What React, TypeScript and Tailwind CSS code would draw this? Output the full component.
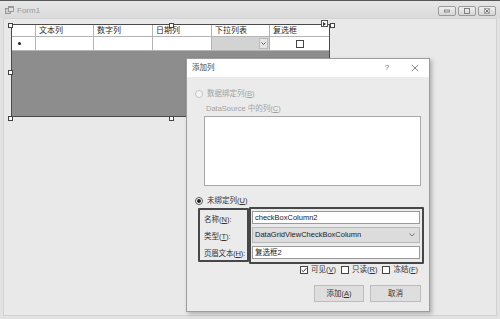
import React from 'react'

const cols = [
  { label: '文本列', w: 'w-[58px]' },
  { label: '数字列', w: 'w-[59px]' },
  { label: '日期列', w: 'w-[59px]' },
  { label: '下拉列表', w: 'w-[58px]' },
  { label: '复选框', w: 'w-[59px]' },
]

// designer selection handles around the grid (x, y centers)
const handles = [
  { id: 'tl', cls: 'left-[8px] top-[22px]' },
  { id: 'tm', cls: 'left-[169px] top-[22px]' },
  { id: 'tr', cls: 'left-[330px] top-[22px]' },
  { id: 'ml', cls: 'left-[8px] top-[69px]' },
  { id: 'bl', cls: 'left-[8px] top-[115px]' },
  { id: 'bm', cls: 'left-[169px] top-[115px]' },
]

function Key({ k }: { k: string }) {
  return (
    <>
      (<span className="underline">{k}</span>)
    </>
  )
}

function Radio({ checked, disabled }: { checked?: boolean; disabled?: boolean }) {
  return (
    <span
      className={
        disabled
          ? 'w-[8px] h-[8px] rounded-full border border-[#c4c4c4] bg-[#f4f4f4] flex items-center justify-center'
          : 'w-[8px] h-[8px] rounded-full border border-[#555] bg-white flex items-center justify-center'
      }
    >
      {checked && <span className="w-[4px] h-[4px] rounded-full bg-[#222]" />}
    </span>
  )
}

function Check({ checked }: { checked?: boolean }) {
  return (
    <span className="w-[8px] h-[8px] border border-[#444] bg-white flex items-center justify-center">
      {checked && (
        <svg width="6" height="6" viewBox="0 0 6 6">
          <path d="M0.6 3.1 L2.3 4.7 L5.4 1.2" fill="none" stroke="#333" strokeWidth="1" />
        </svg>
      )}
    </span>
  )
}

function WinButton({ kind }: { kind: 'min' | 'max' | 'close' }) {
  return (
    <div className="w-[18px] h-[10px] rounded-[2px] border border-[#9a9a9a] bg-gradient-to-b from-[#efefef] to-[#d6d6d6] flex items-center justify-center">
      <svg width="8" height="6" viewBox="0 0 8 6">
        {kind === 'min' && <rect x="1.5" y="2" width="5" height="2" fill="none" stroke="#777" strokeWidth="0.8" />}
        {kind === 'max' && <rect x="1.5" y="0.5" width="5" height="5" fill="none" stroke="#777" strokeWidth="0.9" />}
        {kind === 'close' && (
          <>
            <rect x="1.5" y="0.5" width="5" height="5" fill="none" stroke="#888" strokeWidth="0.7" />
            <path d="M2.3 1.3 L5.7 4.7 M5.7 1.3 L2.3 4.7" stroke="#666" strokeWidth="0.9" />
          </>
        )}
      </svg>
    </div>
  )
}

export default function App() {
  return (
    <div className="relative w-[500px] h-[319px] overflow-hidden bg-[#e2e2e2] border-t border-[#555] flex flex-col font-['Liberation_Sans','Noto_Sans_CJK_SC',sans-serif] text-[#2a2a2a]">
      {/* ── Form1 title bar ── */}
      <div className="h-[17px] flex items-center pl-[5px] pr-[4px] bg-gradient-to-b from-[#e6e6e6] to-[#dadada]">
        <svg width="9" height="9" viewBox="0 0 9 9" className="mr-[3px] mt-[2px]">
          <rect x="0.5" y="2.5" width="5" height="5" fill="#cfcfcf" stroke="#888" strokeWidth="0.8" />
          <rect x="3.5" y="0.5" width="5" height="5" fill="#e0e0e0" stroke="#8a8a8a" strokeWidth="0.8" />
          <rect x="3.5" y="0.5" width="5" height="1.5" fill="#9a9a9a" />
        </svg>
        <span className="text-[8px] leading-none text-[#999] mt-[3px]">Form1</span>
        <div className="ml-auto flex gap-[2px] mt-[3px]">
          <WinButton kind="min" />
          <WinButton kind="max" />
          <WinButton kind="close" />
        </div>
      </div>

      {/* ── Client area ── */}
      <div className="flex-1 mx-[3px] mb-[3px] bg-[#e9e9e9] border border-[#d2d2d2] pt-[5px] pl-[7px]">
        <div className="w-[319px] h-[93px] border border-[#4a4a4a] flex flex-col bg-[#8d8d8d]">
          {/* header row */}
          <div className="h-[12px] flex bg-white border-b border-[#b4b4b4]">
            <div className="w-[24px] border-r border-[#b4b4b4]" />
            {cols.map((c, i) => (
              <div
                key={c.label}
                className={`${c.w} ${i < cols.length - 1 ? 'border-r border-[#b4b4b4]' : ''} text-[8px] leading-[11px] pl-[3px] whitespace-nowrap`}
              >
                {c.label}
              </div>
            ))}
          </div>
          {/* new row */}
          <div className="h-[14px] flex bg-white border-b border-[#b4b4b4]">
            <div className="w-[24px] border-r border-[#b4b4b4] flex items-center pl-[6px]">
              <span className="w-[3px] h-[3px] rounded-full bg-[#222]" />
            </div>
            <div className="w-[58px] border-r border-[#b4b4b4]" />
            <div className="w-[59px] border-r border-[#b4b4b4]" />
            <div className="w-[59px] border-r border-[#b4b4b4]" />
            <div className="w-[58px] border-r border-[#b4b4b4] bg-[#d3d3d3] flex justify-end items-center pr-[1px]">
              <div className="w-[9px] h-[11px] bg-[#e4e4e4] border border-[#bdbdbd] flex items-center justify-center">
                <svg width="5" height="3" viewBox="0 0 5 3">
                  <path d="M0.4 0.4 L2.5 2.5 L4.6 0.4" fill="none" stroke="#555" strokeWidth="0.9" />
                </svg>
              </div>
            </div>
            <div className="w-[59px] flex items-center justify-center">
              <span className="w-[8px] h-[8px] border border-[#444] bg-white" />
            </div>
          </div>
        </div>
      </div>

      {/* ── Designer handles ── */}
      {handles.map((h) => (
        <span key={h.id} className={`absolute ${h.cls} w-[5px] h-[5px] bg-white border border-[#444]`} />
      ))}
      <span className="absolute left-[321px] top-[19px] w-[7px] h-[7px] bg-white border border-[#555] flex items-center justify-center">
        <svg width="3" height="4" viewBox="0 0 3 4">
          <path d="M0 0 L3 2 L0 4 Z" fill="#333" />
        </svg>
      </span>

      {/* ── 添加列 dialog ── */}
      <div className="absolute left-[186px] top-[57px] w-[244px] h-[254px] border border-[#9c9c9c] bg-[#ebebeb] shadow-[2px_2px_4px_rgba(0,0,0,0.25)] flex flex-col text-[7.5px]">
        <div className="h-[18px] bg-white flex items-center pl-[5px] shrink-0">
          <span className="text-[#444] leading-none">添加列</span>
          <span className="ml-auto w-[28px] text-center text-[#777] text-[8px]">?</span>
          <span className="w-[28px] flex justify-center">
            <svg width="8" height="8" viewBox="0 0 8 8">
              <path d="M0.8 0.8 L7.2 7.2 M7.2 0.8 L0.8 7.2" stroke="#777" strokeWidth="0.9" />
            </svg>
          </span>
        </div>

        <div className="flex flex-col pt-[11px]">
          <div className="h-[12px] flex items-center gap-[4px] pl-[8px] text-[#a2a2a2]">
            <Radio disabled />
            <span>数据绑定列<Key k="B" /></span>
          </div>
          <div className="h-[12px] mt-[3px] flex items-center pl-[19px] text-[#a2a2a2]">
            DataSource 中的列<Key k="C" />
          </div>
          <div className="ml-[17px] mt-[1px] w-[217px] h-[70px] bg-white border border-[#a8a8a8]" />

          <div className="h-[12px] mt-[9px] flex items-center gap-[4px] pl-[8px] text-[#333]">
            <Radio checked />
            <span>未绑定列<Key k="U" /></span>
          </div>

          <div className="flex ml-[11px] h-[57px]">
            <div className="w-[51px] mt-[1px] h-[54px] border-2 border-[#474747] rounded-[1px] flex flex-col pl-[4px] pt-[2px] text-[#333]">
              <div className="h-[13px] mt-[1px] flex items-center whitespace-nowrap">名称<Key k="N" />:</div>
              <div className="h-[16px] mt-[3px] flex items-center whitespace-nowrap">类型<Key k="T" />:</div>
              <div className="h-[13px] mt-[3px] flex items-center whitespace-nowrap tracking-[-0.2px]">页眉文本<Key k="H" />:</div>
            </div>
            <div className="w-[175px] h-[57px] border-2 border-[#474747] rounded-[1px] flex flex-col gap-[3px] pt-[2px] pl-[1px] pr-[2px]">
              <div className="h-[13px] bg-white border border-[#9a9a9a] flex items-center pl-[2px] text-[#222]">
                checkBoxColumn2
              </div>
              <div className="h-[16px] bg-[#dcdcdc] border border-[#b8b8b8] flex items-center pl-[2px] pr-[4px] text-[#222]">
                DataGridViewCheckBoxColumn
                <svg width="6" height="4" viewBox="0 0 6 4" className="ml-auto">
                  <path d="M0.5 0.5 L3 3 L5.5 0.5" fill="none" stroke="#666" strokeWidth="0.9" />
                </svg>
              </div>
              <div className="h-[13px] bg-white border border-[#9a9a9a] flex items-center pl-[2px] text-[#222]">
                复选框2
              </div>
            </div>
          </div>

          <div className="h-[10px] mt-[1px] flex items-center justify-end pr-[11px] gap-[5px] text-[#333]">
            <span className="flex items-center gap-[3px]">
              <Check checked />
              <span>可见<Key k="V" /></span>
            </span>
            <span className="flex items-center gap-[3px]">
              <Check />
              <span>只读<Key k="R" /></span>
            </span>
            <span className="flex items-center gap-[3px]">
              <Check />
              <span>冻结<Key k="F" /></span>
            </span>
          </div>

          <div className="mt-[10px] flex justify-end gap-[6px] pr-[8px]">
            <div className="w-[50px] h-[17px] bg-[#dedede] border border-[#bcbcbc] flex items-center justify-center text-[#333]">
              添加<Key k="A" />
            </div>
            <div className="w-[51px] h-[17px] bg-[#dedede] border border-[#bcbcbc] flex items-center justify-center text-[#333]">
              取消
            </div>
          </div>
        </div>
      </div>
    </div>
  )
}
